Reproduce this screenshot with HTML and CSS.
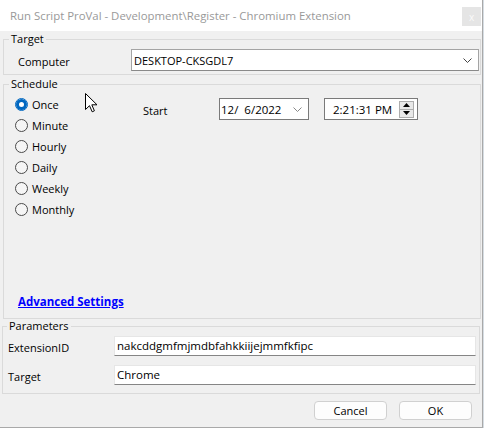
FILE: index.html
```html
<!DOCTYPE html>
<html>
<head>
<meta charset="utf-8">
<link rel="stylesheet" href="styles.css">
</head>
<body>
<div class="window">
  <div class="titlebar">
    <span class="title">Run Script ProVal - Development\Register - Chromium Extension</span>
    <span class="close">x</span>
  </div>
  <fieldset class="group target">
    <legend class="legend">Target</legend>
    <div class="target-row">
      <span class="target-label">Computer</span>
      <div class="combo">
        <span class="combo-text">DESKTOP-CKSGDL7</span>
        <svg class="chev" width="9" height="5" viewBox="0 0 9 5"><path d="M0.5 0.5 L4.5 4.5 L8.5 0.5" fill="none" stroke="#444" stroke-width="1"/></svg>
      </div>
    </div>
  </fieldset>
  <fieldset class="group schedule">
    <legend class="legend">Schedule</legend>
    <div class="schedule-body">
      <div class="schedule-top">
        <div class="radios">
          <div class="radio-row"><span class="radio checked"></span><span class="radio-label">Once</span></div>
          <div class="radio-row"><span class="radio"></span><span class="radio-label">Minute</span></div>
          <div class="radio-row"><span class="radio"></span><span class="radio-label">Hourly</span></div>
          <div class="radio-row"><span class="radio"></span><span class="radio-label">Daily</span></div>
          <div class="radio-row"><span class="radio"></span><span class="radio-label">Weekly</span></div>
          <div class="radio-row"><span class="radio"></span><span class="radio-label">Monthly</span></div>
        </div>
        <div class="start">
          <span class="start-label">Start</span>
          <div class="datebox">
            <span class="date-text">12/&nbsp; 6/2022</span>
            <svg class="chev-small" width="9" height="5" viewBox="0 0 9 5"><path d="M0.5 0.5 L4.5 4.5 L8.5 0.5" fill="none" stroke="#888" stroke-width="1"/></svg>
          </div>
          <div class="timebox">
            <span class="time-text">2:21:31 PM</span>
            <div class="spin">
              <div class="spin-btn"><svg width="7" height="4" viewBox="0 0 7 4"><path d="M3.5 0 L7 4 L0 4 Z" fill="#000"/></svg></div>
              <div class="spin-btn"><svg width="7" height="4" viewBox="0 0 7 4"><path d="M0 0 L7 0 L3.5 4 Z" fill="#000"/></svg></div>
            </div>
          </div>
        </div>
      </div>
      <a class="adv-link">Advanced Settings</a>
    </div>
  </fieldset>
  <fieldset class="group params">
    <legend class="legend legend-params">Parameters</legend>
    <div class="param-row first">
      <span class="param-label">ExtensionID</span>
      <div class="param-input">nakcddgmfmjmdbfahkkiijejmmfkfipc</div>
    </div>
    <div class="param-row">
      <span class="param-label">Target</span>
      <div class="param-input">Chrome</div>
    </div>
  </fieldset>
  <div class="buttons">
    <div class="btn">Cancel</div>
    <div class="btn">OK</div>
  </div>
  <svg class="cursor" width="13" height="20" viewBox="0 0 13 20"><path d="M0.5 0.5 L0.5 16.5 L4.5 12.7 L7.2 18.8 L9.4 17.8 L6.8 11.8 L12 11.8 Z" fill="#fff" stroke="#000" stroke-width="1" stroke-linejoin="miter"/></svg>
</div>
</body>
</html>
```

FILE: styles.css
```css
html, body {
  margin: 0;
  padding: 0;
}
body {
  width: 484px;
  height: 428px;
  background: #d6dde3;
  font-family: "Open Sans", "Noto Sans", sans-serif;
  font-size: 11px;
  color: #000;
  overflow: hidden;
}
.window {
  position: relative;
  width: 482px;
  height: 427px;
  background: #f0f0f0;
  border-right: 1px solid #a9a9a9;
  border-bottom: 1px solid #a9a9a9;
  display: flex;
  flex-direction: column;
}
.titlebar {
  height: 31px;
  background: #fff;
  display: flex;
  align-items: center;
  justify-content: space-between;
  padding-left: 10px;
  flex: none;
}
.title {
  color: #999;
  font-size: 11.4px;
}
.close {
  width: 19px;
  height: 19px;
  margin-right: 1px;
  margin-top: 2px;
  background: #e5e5e5;
  color: #fafafa;
  font-size: 10px;
  display: flex;
  align-items: center;
  justify-content: center;
}
.group {
  margin: 0 1px 0 3px;
  padding: 0;
  border: 1px solid #dadada;
  min-width: 0;
  flex: none;
}
.legend {
  padding: 0 2px;
  margin-left: 5px;
  line-height: 14px;
  height: 14px;
}
.target {
  margin-top: 1px;
}
.target-row {
  display: flex;
  align-items: center;
  margin-top: 3px;
  padding-bottom: 3px;
}
.target-label {
  width: 113px;
  padding-left: 14px;
  padding-top: 3px;
  flex: none;
}
.combo {
  width: 338px;
  height: 20px;
  background: #fff;
  border: 1px solid #a4a4a4;
  border-bottom-color: #8a8a8a;
  display: flex;
  align-items: center;
  justify-content: space-between;
  padding: 0 6px 0 2px;
  flex: none;
}
.chev {
  margin-top: 1px;
}
.schedule {
  margin-top: 2px;
  height: 242px;
  box-sizing: border-box;
}
.schedule-body {
  height: 226px;
  display: flex;
  flex-direction: column;
}
.schedule-top {
  display: flex;
}
.radios {
  width: 139px;
  padding-left: 11px;
  padding-top: 3px;
  box-sizing: border-box;
  flex: none;
}
.radio-row {
  height: 21px;
  display: flex;
  align-items: center;
}
.radio {
  width: 11px;
  height: 11px;
  border-radius: 50%;
  border: 1px solid #4a4a4a;
  background: #f5f5f5;
  margin-right: 4px;
  flex: none;
}
.radio.checked {
  border-color: #0067c0;
  background: #fff;
  box-shadow: inset 0 0 0 3px #0067c0;
}
.start {
  display: flex;
  align-items: flex-start;
  margin-top: 7px;
}
.start-label {
  width: 76px;
  padding-top: 5px;
  flex: none;
}
.datebox {
  width: 81px;
  height: 20px;
  background: #fff;
  border: 1px solid #7a7a7a;
  display: flex;
  align-items: center;
  justify-content: space-between;
  padding: 0 6px 0 1px;
  font-size: 11.5px;
  flex: none;
}
.chev-small {
  margin-top: 1px;
}
.timebox {
  margin-left: 15px;
  height: 20px;
  background: #fff;
  border: 1px solid #7a7a7a;
  display: flex;
  align-items: center;
  justify-content: space-between;
  padding-left: 8px;
  padding-right: 3px;
  width: 81px;
  font-size: 11.5px;
  flex: none;
}
.spin {
  display: flex;
  flex-direction: column;
  width: 13px;
  height: 15px;
  border: 1px solid #adadad;
}
.spin-btn {
  flex: 1;
  display: flex;
  align-items: center;
  justify-content: center;
  background: #e8e8e8;
}
.spin-btn + .spin-btn {
  border-top: 1px solid #adadad;
}
.adv-link {
  margin-top: auto;
  margin-bottom: 7px;
  margin-left: 14px;
  color: #0000ff;
  font-weight: bold;
  text-decoration: underline;
  line-height: 16px;
  font-size: 11.5px;
}
.params {
  margin-top: 0;
  margin-left: 2px;
  margin-right: 2px;
  padding-bottom: 8px;
}
.legend-params {
  margin-left: 4px;
}
.param-row {
  display: flex;
  align-items: center;
  margin-top: 9px;
}
.param-row.first {
  margin-top: 3px;
}
.param-label {
  width: 106px;
  padding-left: 5px;
  padding-top: 3px;
  flex: none;
}
.param-input {
  width: 358px;
  height: 18px;
  background: #fff;
  border: 1px solid #e6e6e6;
  border-bottom-color: #858585;
  padding-left: 2px;
  line-height: 17px;
  font-size: 11.5px;
}
.buttons {
  display: flex;
  justify-content: flex-end;
  gap: 12px;
  padding-right: 10px;
  margin-top: 7px;
}
.btn {
  width: 71px;
  height: 17px;
  background: #fdfdfd;
  border: 1px solid #d0d0d0;
  border-radius: 4px;
  display: flex;
  align-items: center;
  justify-content: center;
}
.cursor {
  position: absolute;
  left: 85px;
  top: 93px;
}
```
